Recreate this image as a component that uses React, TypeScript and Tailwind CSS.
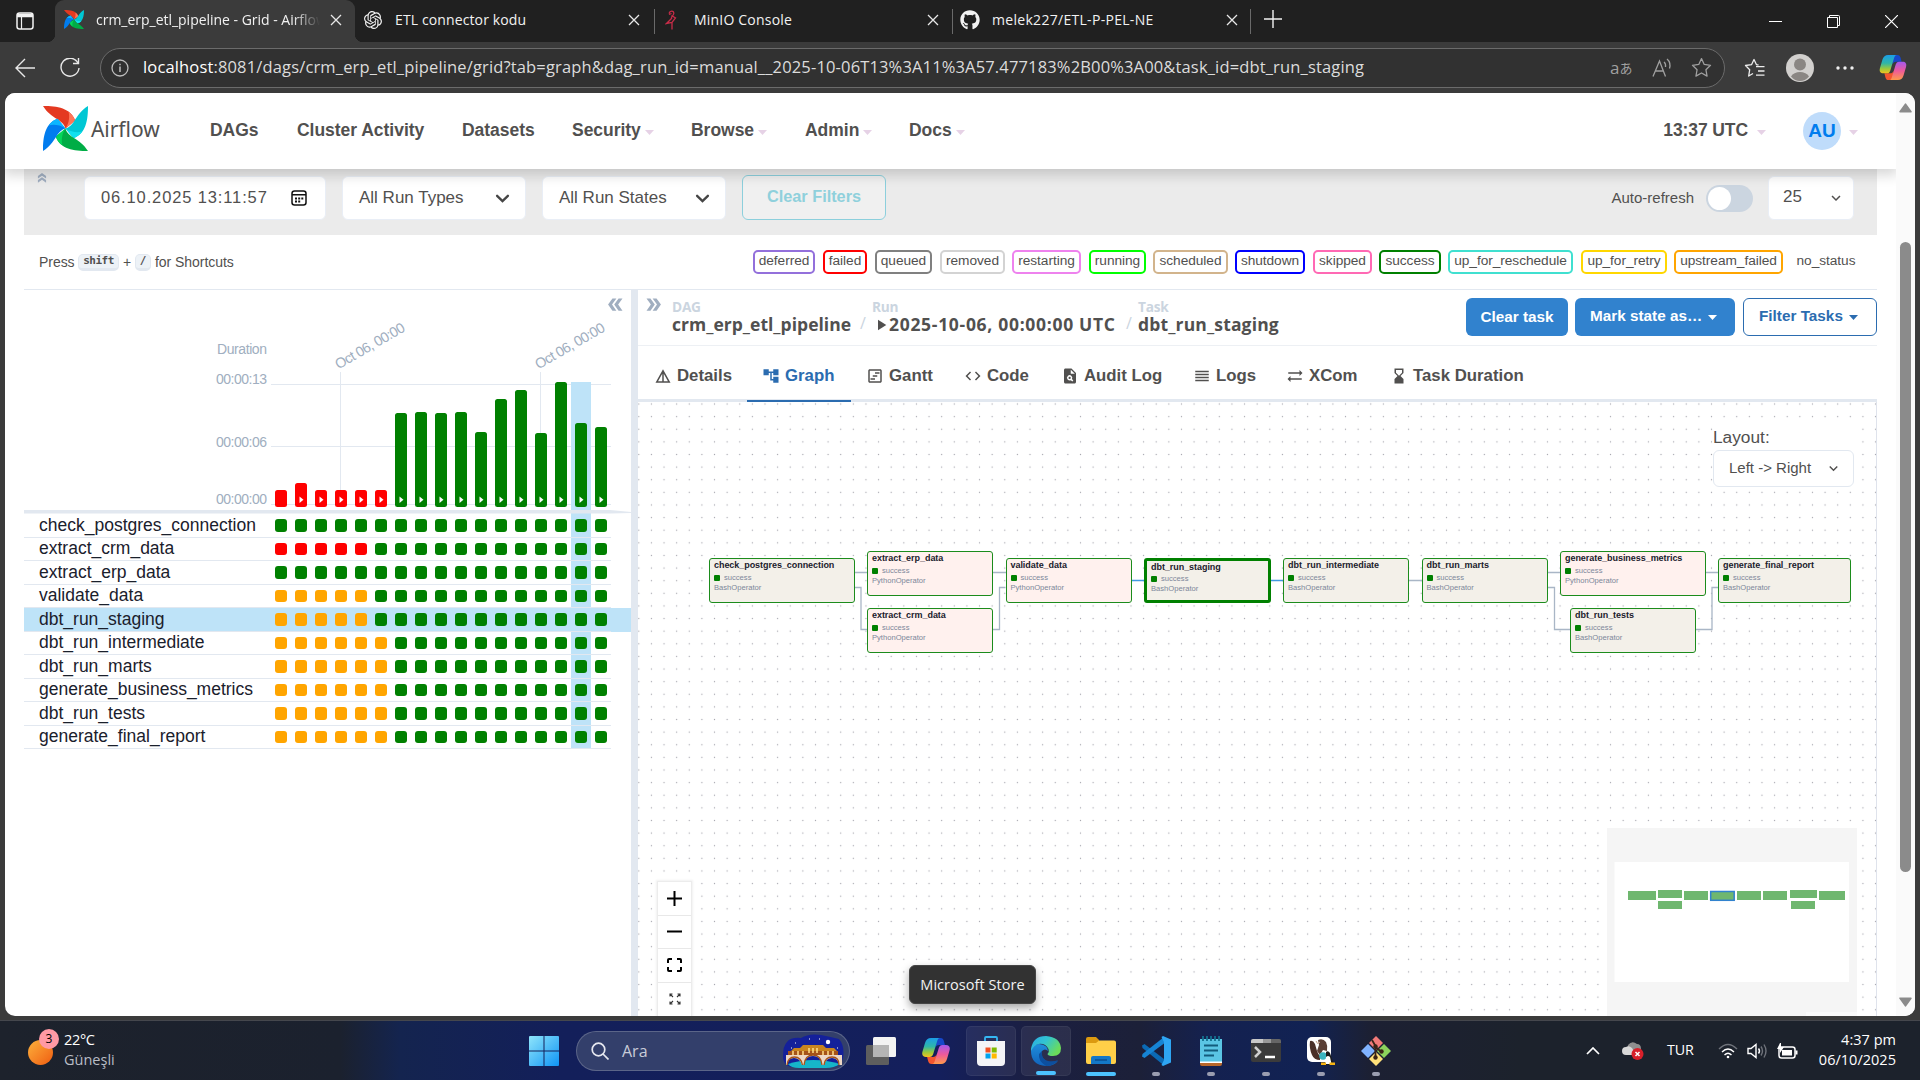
import React from "react";
import {
  MdAccountTree,
  MdCode,
  MdDetails,
  MdDoubleArrow,
  MdHourglassBottom,
  MdKeyboardArrowDown,
  MdOutlineViewTimeline,
  MdPlagiarism,
  MdPlayArrow,
  MdReorder,
  MdSyncAlt,
} from "react-icons/md";
import { SiOpenai } from "react-icons/si";
import { FaGithub } from "react-icons/fa";

const UI = "font-['Open_Sans','Noto_Sans',sans-serif]";

/* ---------- logos and small drawings ---------- */

function Pinwheel({ className }: { className: string }) {
  const blades = [
    { r: 0, a: "#e43921", b: "#ff7557" },
    { r: 90, a: "#00c7d4", b: "#11e1ee" },
    { r: 180, a: "#00ad46", b: "#04d659" },
    { r: 270, a: "#017cee", b: "#0cb6ff" },
  ];
  return (
    <svg viewBox="0 0 44 44" preserveAspectRatio="none" className={className}>
      {blades.map((b) => (
        <g key={b.r} transform={`rotate(${b.r} 22 22)`}>
          <path d="M0 0 C14 0 27 2 31.5 14 L22 22 C20 13 8 13 0 0Z" fill={b.a} />
          <path d="M22 22 C26 16 26 10 25 5.5 C28 8 30.5 10.500 31.500 14.500Z" fill={b.b} />
        </g>
      ))}
    </svg>
  );
}

function CopilotLogo({ className, id }: { className: string; id: string }) {
  return (
    <svg viewBox="0 0 28 28" className={className}>
      <defs>
        <linearGradient id={id + "a"} x1="0" y1="0" x2="0" y2="1">
          <stop offset="0" stopColor="#1b9de8" />
          <stop offset=".45" stopColor="#2fb6a8" />
          <stop offset=".75" stopColor="#9bc93c" />
          <stop offset="1" stopColor="#f4c21f" />
        </linearGradient>
        <linearGradient id={id + "b"} x1="0" y1="0" x2="0" y2="1">
          <stop offset="0" stopColor="#a459ee" />
          <stop offset=".5" stopColor="#ee5a9a" />
          <stop offset="1" stopColor="#ff9a4a" />
        </linearGradient>
      </defs>
      <path d="M14 1h4.500c2 0 2.800 1 3.400 3l1 4h-5.500c-2.500 0-3.400 1-4 3z" fill="#1747c9" />
      <path d="M14 27H9.500c-2 0-2.800-1-3.400-3l-1-4h5.500c2.500 0 3.400-1 4-3z" fill="#f4562f" />
      <path d="M9 1h9c-1.500 0-2.200 1-2.800 3l-4 13c-.7 2-1.600 3-3.500 3H4c-3 0-4.500-2-3.500-5.500l2.500-8.500C4 2.500 6 1 9 1z" fill={`url(#${id}a)`} />
      <path d="M19 27h-9c1.500 0 2.200-1 2.800-3l4-13c.7-2 1.600-3 3.500-3H24c3 0 4.500 2 3.500 5.500l-2.500 8.500c-1 3.500-3 5-6 5z" fill={`url(#${id}b)`} />
    </svg>
  );
}

function Caret({ className }: { className: string }) {
  return (
    <svg viewBox="0 0 10 5" className={className} preserveAspectRatio="none">
      <path d="M0 0h10L5 5z" fill="currentColor" />
    </svg>
  );
}

function Cross({ className }: { className: string }) {
  return (
    <svg viewBox="0 0 12 12" className={className} fill="none" stroke="#e8e8e8" strokeWidth="1.300">
      <path d="M1 1l10 10M11 1L1 11" />
    </svg>
  );
}

/* ---------- browser chrome ---------- */

function TabStrip() {
  return (
    <div className={`${UI} flex h-[42px] shrink-0 bg-[#202020] text-[14px] text-[#f2f2f2]`}>
      <div className="flex w-[55px] items-center rounded-br-[8px] pl-[16px]">
        <svg viewBox="0 0 18 18" className="h-[18px] w-[18px]" fill="none" stroke="#f2f2f2" strokeWidth="1.500">
          <rect x="1" y="1" width="16" height="16" rx="2.500" />
          <path d="M1 3.500h16" strokeWidth="3.500" />
          <path d="M5.500 4v13" strokeWidth="1.200" />
        </svg>
      </div>
      <div className="relative flex w-[300px] items-center rounded-t-[9px] bg-[#3b3b3b] pb-[3px] pl-[9px]">
        <span className="absolute bottom-0 left-[-8px] h-2 w-2 bg-[radial-gradient(circle_at_0_0,#202020_8px,#3b3b3b_8.500px)]" />
        <span className="absolute right-[-8px] bottom-0 h-2 w-2 bg-[radial-gradient(circle_at_100%_0,#202020_8px,#3b3b3b_8.500px)]" />
        <Pinwheel className="h-[19px] w-[20px]" />
        <div className="ml-[12px] w-[224px] overflow-hidden whitespace-nowrap tracking-[-0.020px] [mask-image:linear-gradient(90deg,#000_88%,transparent_100%)]">
          crm_erp_etl_pipeline - Grid - Airflow
        </div>
        <Cross className="ml-[10px] h-[12px] w-[12px]" />
      </div>
      <div className="flex w-[299px] items-center pb-[3px] pl-[9px]">
        <SiOpenai className="h-[18px] w-[18px]" />
        <div className="ml-[13px] w-[232px] tracking-[0.120px]">ETL connector kodu</div>
        <Cross className="ml-[1px] h-[12px] w-[12px]" />
      </div>
      <div className="mt-[9px] h-[25px] w-px bg-[#6a6a6a]" />
      <div className="flex w-[297px] items-center pb-[3px] pl-[10px]">
        <svg viewBox="0 0 12 20" className="h-[20px] w-[12px]" fill="none" stroke="#c72c48" strokeWidth="1.300">
          <path d="M4 3.500C5 0 9 .5 8.800 3.500C8.500 6 6 6 6.500 8.500M6.500 3.500l-2.500 1M7 8L1.500 13.500l5.500-1 3.500-4.500L6.500 5.500M7 12V19.500" />
        </svg>
        <div className="ml-[17px] w-[232px] tracking-[0.200px]">MinIO Console</div>
        <Cross className="ml-[1px] h-[12px] w-[12px]" />
      </div>
      <div className="mt-[9px] h-[25px] w-px bg-[#6a6a6a]" />
      <div className="flex w-[297px] items-center pb-[3px] pl-[7px]">
        <FaGithub className="h-[20px] w-[20px]" />
        <div className="ml-[12px] w-[232px] tracking-[0.300px]">melek227/ETL-P-PEL-NE</div>
        <Cross className="ml-[2px] h-[12px] w-[12px]" />
      </div>
      <div className="mt-[9px] h-[25px] w-px bg-[#6a6a6a]" />
      <svg viewBox="0 0 18 18" className="mt-[10px] ml-[13px] h-[18px] w-[18px]" stroke="#f2f2f2" strokeWidth="1.400">
        <path d="M0 9h18M9 0v18" />
      </svg>
      <div className="ml-auto flex items-center gap-[45px] pr-[22px]">
        <svg viewBox="0 0 13 13" className="h-[13px] w-[13px]" stroke="#fff">
          <path d="M0 6.500h13" />
        </svg>
        <svg viewBox="0 0 13 13" className="h-[13px] w-[13px]" stroke="#fff" fill="none">
          <path d="M.5 2.500h10v10H.5zM2.500 2.500V.5h9q1 0 1 1v9h-2" />
        </svg>
        <svg viewBox="0 0 13 13" className="h-[13px] w-[13px]" stroke="#fff" strokeWidth="1.200">
          <path d="M0 0l13 13M13 0L0 13" />
        </svg>
      </div>
    </div>
  );
}

const STAR = "M10 1.500l2.600 5.600 6 .8-4.400 4.200 1.100 6.100L10 15.200l-5.300 3 1.100-6.100L1.400 7.900l6-.8z";

function Toolbar() {
  return (
    <div className={`${UI} flex h-[51px] shrink-0 items-center bg-[#3b3b3b]`}>
      <svg viewBox="0 0 20 20" className="ml-[15px] h-[20px] w-[20px]" fill="none" stroke="#e8e8e8" strokeWidth="1.400">
        <path d="M20 10H1M10 1L1 10l9 9" />
      </svg>
      <svg viewBox="0 0 20 20" className="ml-[25px] h-[20px] w-[20px]" fill="none" stroke="#e8e8e8" strokeWidth="1.400">
        <path d="M18 5A9 9 0 1 0 19 10M18.500 0v5.500H13" />
      </svg>
      <div className="ml-[20px] flex h-[40px] w-[1625px] items-center rounded-full border border-[#6b6b6b] bg-[#313131] pl-[10px]">
        <svg viewBox="0 0 18 18" className="h-[18px] w-[18px]" fill="none" stroke="#bdbdbd" strokeWidth="1.300">
          <circle cx="9" cy="9" r="8" />
          <path d="M9 7.500v5.500M9 4.800v1.500" strokeWidth="1.500" />
        </svg>
        <div className="ml-[14px] w-[1460px] text-[16.500px] tracking-[0.150px] whitespace-nowrap text-[#dcdcdc]">
          <span className="text-white">localhost</span>
          :8081/dags/crm_erp_etl_pipeline/grid?tab=graph&amp;dag_run_id=manual__2025-10-06T13%3A11%3A57.477183%2B00%3A00&amp;task_id=dbt_run_staging
        </div>
        <div className="ml-[7px] flex w-[22px] items-center text-[#a0a0a0]">
          <span className="text-[17px] leading-none">a</span>
          <span className="font-['Noto_Sans_CJK_JP',sans-serif] text-[13px] leading-none">あ</span>
        </div>
        <svg viewBox="0 0 20 20" className="ml-[20px] h-[20px] w-[20px]" fill="none" stroke="#a0a0a0" strokeWidth="1.300">
          <path d="M1 18.500L7.500 3l6 15.500M3.500 13h8M12 4c1.500 1.200 1.800 3 1.500 5M15 1c3 2.500 3.500 6 2.500 9.500" />
        </svg>
        <svg viewBox="0 0 20 20" className="ml-[19px] h-[21px] w-[21px]" fill="none" stroke="#a0a0a0" strokeWidth="1.200" strokeLinejoin="round">
          <path d={STAR} />
        </svg>
      </div>
      <svg viewBox="0 0 21 20" className="ml-[19px] h-[20px] w-[21px]" fill="none" stroke="#ededed" strokeWidth="1.300" strokeLinejoin="round">
        <path d="M14.500 7L12.500 6.700 10 1.500 7.500 6.700 1.500 7.500 5.700 11.700 4.700 18 9 15.500M12 8.700h8.500M14 13h6.500M12 17.200h8.500" />
      </svg>
      <svg viewBox="0 0 28 28" className="ml-[21px] h-[28px] w-[28px]">
        <circle cx="14" cy="14" r="14" fill="#d2d0ce" />
        <circle cx="14" cy="10.500" r="6" fill="#8a8683" />
        <path d="M5 22.500C8 16.500 20 16.500 23 22.500C18 28.500 10 28.500 5 22.500z" fill="#8a8683" />
      </svg>
      <svg viewBox="0 0 18 4" className="ml-[22px] h-[4px] w-[18px]" fill="#f0f0f0">
        <circle cx="2" cy="2" r="1.700" />
        <circle cx="9" cy="2" r="1.700" />
        <circle cx="16" cy="2" r="1.700" />
      </svg>
      <CopilotLogo id="tb" className="ml-[25px] h-[27px] w-[28px]" />
    </div>
  );
}

/* ---------- Airflow page ---------- */

function NavBar() {
  const items: [string, string, boolean][] = [
    ["DAGs", "w-[87px]", false],
    ["Cluster Activity", "w-[165px]", false],
    ["Datasets", "w-[110px]", false],
    ["Security", "w-[119px]", true],
    ["Browse", "w-[114px]", true],
    ["Admin", "w-[104px]", true],
    ["Docs", "w-[80px]", true],
  ];
  return (
    <div className="relative z-10 flex h-[76px] shrink-0 items-center bg-white pl-[38px] text-[17.500px] font-bold text-[#51504f] shadow-[0_4px_12px_2px_rgba(0,0,0,0.16)]">
      <Pinwheel className="mb-[6px] h-[45px] w-[45px]" />
      <span className="ml-[3px] w-[119px] pb-[3px] font-['Noto_Sans',sans-serif] text-[21px] font-normal tracking-[-0.050px]">Airflow</span>
      {items.map(([label, w, caret]) => (
        <div key={label} className={`flex items-center pb-[2px] tracking-[-0.030px] whitespace-nowrap ${w}`}>
          {label}
          {caret && <Caret className="mt-[4px] ml-[4px] h-[5px] w-[9px] text-[#e6d2e6]" />}
        </div>
      ))}
      <div className="mr-[38px] ml-auto flex items-center">
        <span className="pb-[2px] tracking-[-0.1px] whitespace-nowrap">13:37 UTC</span>
        <Caret className="mt-[2px] ml-[9px] h-[5px] w-[9px] text-[#e6d2e6]" />
        <span className="ml-[37px] flex h-[38px] w-[38px] items-center justify-center rounded-full bg-[#bfdcfb] text-[19px] text-[#017cee]">AU</span>
        <Caret className="mt-[2px] ml-[8px] h-[5px] w-[9px] text-[#e6d2e6]" />
      </div>
    </div>
  );
}

function Chevron({ className }: { className: string }) {
  return (
    <svg viewBox="0 0 16 10" className={className} fill="none" stroke="#454545" strokeWidth="2.600" strokeLinecap="round">
      <path d="M2 2l6 6 6-6" />
    </svg>
  );
}

function FilterBar() {
  const box = "flex h-[44px] items-center rounded-[6px] border border-[#e9eef6] bg-white";
  return (
    <div className="flex h-[66px] shrink-0 items-start bg-[#ebebeb] pt-[7px] text-[17px] text-[#51504f]">
      <MdDoubleArrow className="mt-[-5px] ml-[11px] h-[14px] w-[14px] -rotate-90 text-[#a0aec0]" />
      <div className={`${box} ml-[35px] w-[242px] pl-[16px]`}>
        <span className="w-[190px] pb-[2px] text-[16.500px] tracking-[0.870px] whitespace-nowrap">06.10.2025 13:11:57</span>
        <svg viewBox="0 0 16 16" className="h-[16px] w-[16px]" fill="none" stroke="#111" strokeWidth="1.500">
          <rect x="1" y="1" width="14" height="14" rx="2.500" />
          <path d="M1 4.800h14" />
          <path d="M4 8.500h2M7.200 8.500h2M10.300 8.500h2M4 11.500h2M7.200 11.500h2" strokeWidth="1.800" />
        </svg>
      </div>
      <div className={`${box} ml-[16px] w-[184px] pl-[16px]`}>
        <span className="w-[136px]">All Run Types</span>
        <Chevron className="h-[9px] w-[15px]" />
      </div>
      <div className={`${box} ml-[16px] w-[184px] pl-[16px]`}>
        <span className="w-[136px]">All Run States</span>
        <Chevron className="h-[9px] w-[15px]" />
      </div>
      <div className="mt-[-1px] ml-[16px] flex h-[45px] w-[144px] items-center justify-center rounded-[6px] border border-[#8ccfdc] bg-[#f0f0f0] pb-[2px] text-[16.300px] font-bold text-[#8fd0dc]">
        Clear Filters
      </div>
      <div className="mr-[23px] ml-auto flex items-center">
        <span className="text-[15px]">Auto-refresh</span>
        <div className="ml-[12px] flex h-[27px] w-[47px] items-center rounded-full bg-[#cbd5e0] pl-[2px]">
          <div className="h-[23px] w-[23px] rounded-full bg-white" />
        </div>
        <div className={`${box} ml-[15px] w-[86px] pl-[14px]`}>
          <span className="w-[44px] pb-[3px]">25</span>
          <MdKeyboardArrowDown className="h-[18px] w-[18px]" />
        </div>
      </div>
    </div>
  );
}

const LEGEND: [string, string][] = [
  ["deferred", "ml-0 w-[62px] border-[mediumpurple]"],
  ["failed", "ml-[8px] w-[44px] border-[red]"],
  ["queued", "ml-[8px] w-[57px] border-[gray]"],
  ["removed", "ml-[8px] w-[65px] border-[lightgrey]"],
  ["restarting", "ml-[7px] w-[69px] border-[violet]"],
  ["running", "ml-[8px] w-[57px] border-[lime]"],
  ["scheduled", "ml-[7px] w-[75px] border-[tan]"],
  ["shutdown", "ml-[7px] w-[70px] border-[blue]"],
  ["skipped", "ml-[8px] w-[59px] border-[hotpink]"],
  ["success", "ml-[7px] w-[62px] border-[green]"],
  ["up_for_reschedule", "ml-[7px] w-[125px] border-[turquoise]"],
  ["up_for_retry", "ml-[8px] w-[86px] border-[gold]"],
  ["upstream_failed", "ml-[7px] w-[109px] border-[orange]"],
  ["no_status", "ml-[8px] w-[70px] border-transparent"],
];

function LegendRow() {
  const kbd =
    "flex h-[17px] items-center rounded-[5px] border border-b-[3px] border-[#e2e8f0] bg-[#edf2f7] font-['DejaVu_Sans_Mono',monospace] text-[11px] font-bold";
  return (
    <div className="flex h-[55px] shrink-0 items-start border-b border-[#e2e8f0] pt-[15px] text-[13.700px] text-[#51504f]">
      <div className="flex h-[24px] items-center pl-[15px] text-[14px] tracking-[-0.050px]">
        <span className="w-[39px]">Press</span>
        <span className={`${kbd} w-[41px] justify-center tracking-[-0.5px]`}>shift</span>
        <span className="w-[16px] text-center">+</span>
        <span className={`${kbd} w-[16px] justify-center`}>/</span>
        <span className="ml-[4px]">for Shortcuts</span>
      </div>
      <div className="mr-[16px] ml-auto flex">
        {LEGEND.map(([name, cls]) => (
          <span key={name} className={`flex h-[24px] items-center justify-center rounded-[5px] border-2 pb-[1px] tracking-[-0.050px] whitespace-nowrap ${cls}`}>
            {name}
          </span>
        ))}
      </div>
    </div>
  );
}

/* ---------- left: run durations and task grid ---------- */

const TOPS = [490, 483, 490, 490, 490, 490, 413, 412, 413, 412, 432, 399, 390, 433, 382, 423, 427];
const SELECTED = 15;

function DurationChart() {
  return (
    <svg viewBox="24 290 607 224" className="h-[224px] w-[607px] shrink-0 font-['Liberation_Sans',Arial,sans-serif]">
      <g stroke="#e2e8f0">
        <path d="M271 384.500h340M271 446.500h340M271 504.500h340M340.500 372v118M540.500 372v61" />
      </g>
      <rect x="571" y="382" width="20" height="132" fill="#bee3f8" />
      <g fill="#a0aec0" fontSize="14" textAnchor="end">
        <text x="267" y="354" textLength="50">Duration</text>
        <text x="267" y="384" textLength="51">00:00:13</text>
        <text x="267" y="447" textLength="51">00:00:06</text>
        <text x="267" y="504" textLength="51">00:00:00</text>
      </g>
      <g fill="#a0aec0" fontSize="14.300">
        <text transform="translate(338.500 369.500) rotate(-30)" textLength="78">Oct 06, 00:00</text>
        <text transform="translate(538.500 369.500) rotate(-30)" textLength="78">Oct 06, 00:00</text>
      </g>
      {TOPS.map((top, i) => (
        <g key={i}>
          <rect x={275 + i * 20} y={top} width="12" height={507 - top} rx="2.500" fill={i < 6 ? "red" : "green"} />
          {i > 0 && <path d={`M${279.5 + i * 20} 496.500v6.500l4-3.250z`} fill="#fff" />}
        </g>
      ))}
      <path d="M24 510H610L631 512V513L611 513.500H24z" fill="#e2e8f0" />
    </svg>
  );
}

const TASKS: [string, string][] = [
  ["check_postgres_connection", "ggggggggggggggggg"],
  ["extract_crm_data", "rrrrrgggggggggggg"],
  ["extract_erp_data", "ggggggggggggggggg"],
  ["validate_data", "ooooogggggggggggg"],
  ["dbt_run_staging", "ooooogggggggggggg"],
  ["dbt_run_intermediate", "ooooooggggggggggg"],
  ["dbt_run_marts", "ooooooggggggggggg"],
  ["generate_business_metrics", "ooooooggggggggggg"],
  ["dbt_run_tests", "ooooooggggggggggg"],
  ["generate_final_report", "ooooooggggggggggg"],
];

function TaskGrid() {
  return (
    <div className="flex flex-col text-[17.500px] text-[#1a202c]">
      {TASKS.map(([name, states], row) => (
        <div key={name} className={`flex h-[23.500px] shrink-0 ${row === 4 ? "w-[607px] bg-[#bee3f8]" : "w-[587px]"}`}>
          <div className="flex w-[587px] border-b border-[#e2e8f0]">
            <div className="flex w-[247px] items-center pl-[15px] leading-none whitespace-nowrap">{name}</div>
            {states.split("").map((s, i) => (
              <div key={i} className={`flex w-[20px] items-center justify-center ${i === SELECTED ? "bg-[#bee3f8]" : ""}`}>
                <div className={`h-[12.500px] w-[12px] rounded-[3px] ${s === "g" ? "bg-[green]" : s === "r" ? "bg-[red]" : "bg-[orange]"}`} />
              </div>
            ))}
          </div>
        </div>
      ))}
    </div>
  );
}

function GridPanel() {
  return (
    <div className="relative flex w-[607px] shrink-0 flex-col">
      <MdDoubleArrow className="absolute top-[4px] right-[5px] h-[21px] w-[21px] rotate-180 text-[#a0aec0]" />
      <DurationChart />
      <TaskGrid />
    </div>
  );
}

/* ---------- right: task header, tabs, graph ---------- */

function Crumb({ label, value, className, icon }: { label: string; value: string; className: string; icon?: boolean }) {
  return (
    <div className={`flex flex-col font-bold whitespace-nowrap ${className}`}>
      <span className="h-[16px] text-[13.700px] leading-[16px] tracking-[-0.250px] text-[#cbd5e0]">{label}</span>
      <span className="flex h-[18px] items-center text-[17.500px] leading-[18px] text-[#51504f]">
        {icon && <MdPlayArrow className="mt-[2px] mr-[-1px] h-[18px] w-[18px]" />}
        {value}
      </span>
    </div>
  );
}

function TaskHeader() {
  return (
    <div className="flex h-[56px] shrink-0 items-start border-b border-[#edf0f4]">
      <MdDoubleArrow className="mt-[4px] ml-[5px] h-[21px] w-[21px] text-[#a0aec0]" />
      <div className={`${UI} flex pt-[9px] pl-[8px]`}>
        <Crumb label="DAG" value="crm_erp_etl_pipeline" className="w-[188px] tracking-[0.020px]" />
        <span className="w-[12px] pt-[15px] text-[16px] leading-[18px] text-[#cbd5e0]">/</span>
        <Crumb label="Run" value="2025-10-06, 00:00:00 UTC" className="w-[254px] tracking-[0.700px]" icon />
        <span className="w-[12px] pt-[15px] text-[16px] leading-[18px] text-[#cbd5e0]">/</span>
        <Crumb label="Task" value="dbt_run_staging" className="w-[160px] tracking-[0.150px]" />
      </div>
      <div className="ml-auto flex pt-[8px] text-[15.300px] font-bold text-white">
        <div className="flex h-[38px] w-[102px] items-center justify-center rounded-[6px] bg-[#3182ce]">Clear task</div>
        <div className="ml-[7px] flex h-[38px] w-[160px] items-center rounded-[6px] bg-[#3182ce] pb-[2px] pl-[15px]">
          Mark state as…
          <Caret className="mt-[2px] ml-[6px] h-[5px] w-[9px]" />
        </div>
        <div className="ml-[8px] flex h-[38px] w-[134px] items-center rounded-[6px] border border-[#2b6cb0] pb-[2px] pl-[15px] text-[#2b6cb0]">
          Filter Tasks
          <Caret className="mt-[2px] ml-[6px] h-[5px] w-[9px]" />
        </div>
      </div>
    </div>
  );
}

function TabsRow() {
  const tabs: [string, React.ComponentType<{ className?: string }>, string][] = [
    ["Details", MdDetails, "w-[108px]"],
    ["Graph", MdAccountTree, "w-[104px]"],
    ["Gantt", MdOutlineViewTimeline, "w-[98px]"],
    ["Code", MdCode, "w-[97px]"],
    ["Audit Log", MdPlagiarism, "w-[132px]"],
    ["Logs", MdReorder, "w-[93px]"],
    ["XCom", MdSyncAlt, "w-[104px]"],
    ["Task Duration", MdHourglassBottom, "w-[160px]"],
  ];
  return (
    <div className="flex h-[56px] shrink-0 border-b-[3px] border-[#e2e8f0] pl-[1px] text-[16.800px] font-bold text-[#51504f]">
      {tabs.map(([label, Icon, w]) => (
        <div
          key={label}
          className={`mb-[-3px] flex items-center pt-[5px] pb-0 pl-[15px] whitespace-nowrap ${w} ${label === "Graph" ? "border-b-2 border-[#2b6cb0] text-[#2b6cb0]" : "border-b-2 border-transparent"}`}
        >
          <Icon className="mr-[5px] h-[18px] w-[18px]" />
          {label}
        </div>
      ))}
    </div>
  );
}

type Node = { id: string; x: number; y: number; w: number; py?: boolean };
const NODES: Node[] = [
  { id: "check_postgres_connection", x: 709, y: 558, w: 145.5 },
  { id: "extract_erp_data", x: 867, y: 551, w: 126, py: true },
  { id: "extract_crm_data", x: 867, y: 608, w: 126, py: true },
  { id: "validate_data", x: 1005.5, y: 558, w: 126, py: true },
  { id: "dbt_run_staging", x: 1144, y: 558, w: 126.5 },
  { id: "dbt_run_intermediate", x: 1283, y: 558, w: 126 },
  { id: "dbt_run_marts", x: 1421.5, y: 558, w: 126 },
  { id: "generate_business_metrics", x: 1560, y: 551, w: 145.5, py: true },
  { id: "dbt_run_tests", x: 1570, y: 608, w: 126 },
  { id: "generate_final_report", x: 1718, y: 558, w: 133 },
];
const OX = 638;
const OY = 402;

function GraphNode({ n }: { n: Node }) {
  const selected = n.id === "dbt_run_staging";
  return (
    <div
      className={`absolute flex h-[44.500px] flex-col rounded-[3px] text-[7.600px] leading-none whitespace-nowrap text-[#7c879a] ${n.py ? "bg-[#fff1ee]" : "bg-[#f3f0e9]"} ${selected ? "border-[3px] border-[green] pt-[2px] pl-[4px]" : "border border-[#1c8c1c] pt-[2px] pl-[4px]"}`}
      style={{ left: n.x - OX, top: n.y - OY, width: n.w }}
    >
      <span className="h-[9px] text-[9px] leading-[9px] font-bold tracking-[-0.050px] text-[#1a202c]">{n.id}</span>
      <span className={`flex h-[7px] items-center ${selected ? "mt-[3px]" : "mt-[4px]"}`}>
        <span className="mr-[4px] h-[6px] w-[6px] rounded-[1px] bg-[green]" />
        success
      </span>
      <span className="mt-[3px]">{n.py ? "PythonOperator" : "BashOperator"}</span>
    </div>
  );
}

const MINI: [number, number, number, number][] = [
  [1628, 891, 28, 9],
  [1658, 890, 24, 8],
  [1658, 901, 24, 8],
  [1684, 891, 24, 9],
  [1737, 891, 24, 9],
  [1763, 891, 24, 9],
  [1790, 890, 27, 8],
  [1791, 901, 24, 8],
  [1819, 891, 26, 9],
];

function GraphCanvas() {
  return (
    <div className="relative flex-1 overflow-hidden border-r border-[#dfe3ec]">
      <svg viewBox="638 402 1239 614" className="absolute inset-0 h-[614px] w-[1239px]" fill="none">
        <defs>
          <pattern id="dots" x="645.100" y="397.700" width="12.620" height="12.620" patternUnits="userSpaceOnUse">
            <circle cx="6.310" cy="6.310" r=".65" fill="#a6a6ae" />
          </pattern>
        </defs>
        <rect x="638" y="402" width="1239" height="614" fill="url(#dots)" />
        <g stroke="#a9b6c6" strokeWidth="1.300">
          <path d="M854 572.500h13M854 587.500h7v42h6M993 572.500h13M993 629.500h6.500v-42h6M1409 580.500h13M1547 572.500h14M1547 587.500h7.500v42h16M1705 572.500h14M1696 629.500h16v-42h6" />
        </g>
        <path d="M1131 580.500h13M1270 580.500h13" stroke="#4299e1" strokeWidth="1.600" />
      </svg>
      {NODES.map((n) => (
        <GraphNode key={n.id} n={n} />
      ))}
      <div className="absolute top-[22px] right-[22px] flex w-[141px] flex-col text-[17.300px] text-[#51504f]">
        <span className="h-[26px] bg-white leading-[26px]">Layout:</span>
        <div className="flex h-[37px] items-center rounded-[6px] border border-[#e2e8f0] bg-white pl-[15px] text-[15px]">
          <span className="w-[96px] whitespace-nowrap">Left -&gt; Right</span>
          <MdKeyboardArrowDown className="h-[17px] w-[17px]" />
        </div>
      </div>
      <div className="absolute top-[479px] left-[19px] flex w-[35px] flex-col border border-[#ececec] bg-white shadow-[0_0_2px_1px_rgba(0,0,0,0.060)]">
        {["M0 7.500h15M7.500 0v15", "M0 7.500h15"].map((d) => (
          <div key={d} className="flex h-[33.500px] items-center justify-center border-b border-[#e8e8e8]">
            <svg viewBox="0 0 15 15" className="h-[15px] w-[15px]" stroke="#000" strokeWidth="2">
              <path d={d} />
            </svg>
          </div>
        ))}
        <div className="flex h-[33.500px] items-center justify-center border-b border-[#e8e8e8]">
          <svg viewBox="0 0 15 14" className="h-[14px] w-[15px]" stroke="#000" strokeWidth="2" fill="none">
            <path d="M1 5V2q0-1 1-1h3M10 1h3q1 0 1 1v3M14 9v3q0 1-1 1h-3M5 13H2q-1 0-1-1V9" />
          </svg>
        </div>
        <div className="flex h-[33.500px] items-center justify-center">
          <svg viewBox="0 0 12 12" className="h-[12px] w-[12px]" stroke="#333" strokeWidth="1.100" fill="none">
            <path d="M1 3.500V1h2.500M1 1l3 3M8.500 1H11v2.500M11 1L8 4M11 8.500V11H8.500M11 11L8 8M3.500 11H1V8.500M1 11l3-3" />
          </svg>
        </div>
      </div>
      <div className="absolute top-[426px] left-[969px] flex h-[188px] w-[250px] bg-[#f5f5f5]">
        <svg viewBox="1607 828 250 188" className="h-[188px] w-[250px]">
          <rect x="1614.500" y="862" width="234.500" height="120" fill="#fff" />
          {MINI.map(([x, y, w, h], i) => (
            <rect key={i} x={x} y={y} width={w} height={h} fill="#6fb76f" />
          ))}
          <rect x="1710.700" y="891.500" width="23.500" height="8.800" fill="#6fb76f" stroke="#3182ce" strokeWidth="1.500" />
          <rect x="1806" y="1012" width="51" height="4" fill="#fafafa" />
        </svg>
      </div>
    </div>
  );
}

function ScrollBar() {
  return (
    <div className="flex w-[19px] shrink-0 flex-col items-center bg-[#fafafa]">
      <svg viewBox="0 0 12 9" className="mt-[10px] h-[10px] w-[13px]">
        <path d="M6 1L11 8H1z" fill="#8b8b8b" stroke="#8b8b8b" strokeWidth="1.500" strokeLinejoin="round" />
      </svg>
      <div className="mt-[129px] h-[630px] w-[11px] rounded-full bg-[#8b8b8b]" />
      <svg viewBox="0 0 12 9" className="mt-[125px] h-[10px] w-[13px]">
        <path d="M6 8L1 1h10z" fill="#8b8b8b" stroke="#8b8b8b" strokeWidth="1.500" strokeLinejoin="round" />
      </svg>
    </div>
  );
}

/* ---------- taskbar ---------- */

function Slot({ children, bar, tile }: { children: React.ReactNode; bar?: string; tile?: boolean }) {
  return (
    <div className={`relative mx-[2.500px] flex h-[50px] w-[50px] items-center justify-center rounded-[5px] ${tile ? "border border-white/5 bg-white/7" : ""}`}>
      {children}
      {bar && <span className={`absolute bottom-0 h-[4px] rounded-full ${bar}`} />}
    </div>
  );
}

function Taskbar() {
  return (
    <div className={`${UI} flex h-[60px] shrink-0 items-center border-t border-[#45474d] bg-[linear-gradient(90deg,#1d222c_0px,#1b212e_340px,#14244f_400px,#131f5a_560px,#141f5c_940px,#1b1f42_1030px,#1c2038_1140px,#142150_1210px,#112253_1310px,#1c2033_1370px,#1c222c_1520px,#1c222c_1920px)] text-[14px] text-white`}>
      <div className="relative ml-[28px] h-[34px] w-[32px]">
        <div className="absolute bottom-[3px] left-0 h-[25px] w-[25px] rounded-full bg-linear-to-br from-[#fbb03b] to-[#ee5a0e]" />
        <div className="absolute top-[-5px] right-[1px] flex h-[20px] w-[20px] items-center justify-center rounded-full bg-[#ff99a4] text-[12px] text-black">3</div>
      </div>
      <div className="ml-[4px] flex w-[465px] flex-col pb-[2px] text-[14.500px] leading-[20px]">
        <span className="tracking-[-0.350px]">22°C</span>
        <span className="text-[#b9bdc6]">Güneşli</span>
      </div>
      <svg viewBox="0 0 30 30" className="h-[30px] w-[30px]">
        <defs>
          <linearGradient id="win" x1="0" y1="0" x2="1" y2="1" gradientUnits="objectBoundingBox">
            <stop offset="0" stopColor="#8fe5fb" />
            <stop offset="1" stopColor="#0f94f5" />
          </linearGradient>
        </defs>
        <path d="M0 1q0-1 1-1h13.500v14.500H0zM15.500 0H29q1 0 1 1v13.500H15.500zM0 15.500h14.500V30H1q-1 0-1-1zM15.500 15.500H30V29q0 1-1 1H15.500z" fill="url(#win)" />
      </svg>
      <div className="ml-[17px] flex h-[40px] w-[274px] items-center rounded-full border border-white/20 bg-[#333f6b] pl-[14px]">
        <svg viewBox="0 0 18 18" className="h-[18px] w-[18px]" fill="none" stroke="#e6e8f0" strokeWidth="1.700">
          <circle cx="7.500" cy="7.500" r="6.300" />
          <path d="M12 12l5.500 5.500" />
        </svg>
        <span className="ml-[13px] w-[161px] text-[16px] text-[#c8cbd8]">Ara</span>
        <svg viewBox="0 0 61 34" className="h-[34px] w-[61px]">
          <path d="M4 8Q8 3 18 4Q26 -1 38 1Q48 3 56 5Q62 12 60 24Q58 34 46 33H14Q0 34 0 22Q0 12 4 8z" fill="#14209a" />
          <path d="M5 30q25-8 52 0-6 4-14 4H16q-8 0-11-4z" fill="#16b5c9" />
          <circle cx="45" cy="8" r="2.200" fill="#fff" />
          <path d="M12 9h1M26 5h1M36 5h1M8 14h1M54 14h1" stroke="#fff" />
          <path d="M8 17l3-3h6l3-3h20l3 3h8l3 3z" fill="#c8841f" />
          <path d="M5 17h50v5H5z" fill="#a5531a" />
          <path d="M10 17v4M15 17v4M20 17v4M26 14v5M30 14v5M34 14v5M40 17v4M45 17v4M50 17v4" stroke="#ffdf8a" strokeWidth="1.500" />
          <path d="M3 31V21h56v10h-3q-1-7-7-7t-8 7h-2q-1-9-9-9t-9 9h-2q-2-7-8-7t-7 7z" fill="#ecd7c6" />
          <path d="M4 31q1-8 7.500-8t8 8M21 31q1-10 9-10t9 10M41 31q1-8 8-8t7 8" fill="none" stroke="#a5531a" strokeWidth="1.300" />
        </svg>
      </div>
      <div className="ml-[3.500px] flex">
        <Slot>
          <svg viewBox="0 0 30 28" className="h-[28px] w-[30px]">
            <rect x="0" y="8" width="23" height="20" rx="1.500" fill="#5e5e5e" />
            <rect x="7" y="0" width="23" height="20" rx="1.500" fill="#f3f3f3" />
            <path d="M7 8h16v12H7z" fill="#b5b5b5" />
          </svg>
        </Slot>
        <Slot>
          <CopilotLogo id="tk" className="h-[28px] w-[28px]" />
        </Slot>
        <Slot tile>
          <svg viewBox="0 0 30 30" className="h-[30px] w-[30px]">
            <path d="M9 6V2q0-1 1-1h10q1 0 1 1v4" fill="none" stroke="#35b6f2" strokeWidth="1.800" />
            <path d="M1 5h28v21q0 4-4 4H5q-4 0-4-4z" fill="#f4f4f6" />
            <path d="M9.500 11.500h5v5h-5z" fill="#f25022" />
            <path d="M15.700 11.500h5v5h-5z" fill="#7fba00" />
            <path d="M9.500 17.500h5v5h-5z" fill="#00a4ef" />
            <path d="M15.700 17.500h5v5h-5z" fill="#ffb900" />
          </svg>
        </Slot>
        <Slot tile bar="w-[20px] bg-[#4cc2ff]">
          <svg viewBox="0 0 30 30" className="h-[30px] w-[30px]">
            <defs>
              <linearGradient id="e1" x1="0" y1="0" x2="1" y2=".5">
                <stop offset="0" stopColor="#2aa9e8" />
                <stop offset=".5" stopColor="#32c4d0" />
                <stop offset="1" stopColor="#6bdc5a" />
              </linearGradient>
              <linearGradient id="e2" x1="0" y1="0" x2="0" y2="1">
                <stop offset="0" stopColor="#1f8ddb" />
                <stop offset="1" stopColor="#1163bb" />
              </linearGradient>
            </defs>
            <path d="M0 15Q0 8 8 8q9 1 9 7-3-3-6 0-2 6 4 10 6 3 12 0-4 5-12 5Q0 29 0 15z" fill="url(#e2)" />
            <path d="M11 15q-1 8 6 10 6 1 10-1-4 6-12 6Q7 25 8 18z" fill="#0d4f9e" />
            <path d="M0 13Q2 0 15 0q14 1 15 12 0 8-8 8-5 0-5.500-2 2-2 1-5-3-6-10-5Q3 9 0 15z" fill="url(#e1)" />
          </svg>
        </Slot>
        <Slot bar="w-[30px] bg-[#4cc2ff]">
          <svg viewBox="0 0 30 28" className="h-[28px] w-[30px]">
            <path d="M0 2q0-2 2-2h8l3 3v6H0z" fill="#dc9a10" />
            <path d="M0 6h10l3-2.500h15q2 0 2 2V25q0 2-2 2H2q-2 0-2-2z" fill="#ffcf48" />
            <path d="M5 27v-6q0-2 2-2h16q2 0 2 2v6z" fill="#1478c8" />
            <path d="M9 23h12" stroke="#0a4f92" strokeWidth="1.500" />
          </svg>
        </Slot>
        <Slot bar="w-[8px] bg-[#9a9db0]">
          <svg viewBox="0 0 30 30" className="h-[30px] w-[30px]">
            <path d="M1 9.500L3.500 8 23 23V29.500L1.500 12z" fill="#0b6ab5" />
            <path d="M1 20.500L3.500 22 23 7.500V1L1.500 18z" fill="#1684d4" />
            <path d="M22 0l8 3.500v23L22 30l-1.500-1L23 24V6L20.500 1z" fill="#2ea5f3" />
          </svg>
        </Slot>
        <Slot bar="w-[8px] bg-[#9a9db0]">
          <svg viewBox="0 0 22 30" className="h-[30px] w-[22px]">
            <path d="M0 3h22v24H0z" fill="#5ac5e4" />
            <path d="M0 26h22v2q0 2-2 2H2q-2 0-2-2z" fill="#b8672a" />
            <path d="M0 25.500h22v1.500H0z" fill="#fff" />
            <path d="M3 0v5M7 0v5M11 0v5M15 0v5M19 0v5" stroke="#13708f" strokeWidth="1.800" />
            <path d="M4 9.500h14M4 14.500h14M4 19.500h10" stroke="#135c7c" strokeWidth="2" />
          </svg>
        </Slot>
        <Slot bar="w-[8px] bg-[#9a9db0]">
          <svg viewBox="0 0 30 23" className="h-[23px] w-[30px]">
            <rect width="30" height="23" rx="2" fill="#3b3b3b" />
            <path d="M0 2q0-2 2-2h10v4H0z" fill="#c8c8c8" />
            <path d="M12 0h8v4h-8z" fill="#999" />
            <path d="M20 0h8q2 0 2 2v2H20z" fill="#666" />
            <path d="M4 8l5 5-5 5" fill="none" stroke="#d0d0d0" strokeWidth="2.500" />
            <path d="M14 18h10" stroke="#fff" strokeWidth="2.500" />
          </svg>
        </Slot>
        <Slot bar="w-[8px] bg-[#9a9db0]">
          <svg viewBox="0 0 28 28" className="h-[28px] w-[28px]">
            <rect x="0" y="0" width="24" height="25" rx="5" fill="#fff" />
            <path d="M3 4q3-1 5 3l2 7q1 3 3 5v4q-6 0-8-5Q2 11 3 4z" fill="#4a3028" />
            <path d="M11 3q5-2 8 2 2 4 1 9l-4-1-3 5-3-4 2-6z" fill="#5b4036" />
            <path d="M9 4l1.500 2.500L13 5" fill="none" stroke="#c9a58c" />
            <circle cx="16" cy="19" r="3.800" fill="#3bb4c0" />
            <path d="M19 15q2-2 4 1l3 9q-2 3-7 3z" fill="#1b1b1b" />
            <path d="M19 20q2-2 4 0l1.500 7H18z" fill="#fff" />
            <path d="M14 25.500h5V28h-5zM22.500 25.500H28V28h-5.500z" fill="#f6b312" />
          </svg>
        </Slot>
        <Slot bar="w-[8px] bg-[#9a9db0]">
          <svg viewBox="0 0 30 30" className="h-[30px] w-[30px]">
            <path d="M15 0l7 7-7 7-7-7z" fill="#f27a78" />
            <path d="M23 8l7 7-7 7-7-7z" fill="#8cd35c" />
            <path d="M7 8l7 7-7 7-7-7z" fill="#80b3ff" />
            <path d="M15 16l7 7-7 7-7-7z" fill="#ffe17a" />
            <path d="M11 4l3.500 6v12M14.500 11l6 5" fill="none" stroke="#3a2416" strokeWidth="1.800" />
            <circle cx="14.500" cy="10.500" r="2.200" fill="#3a2416" />
            <circle cx="14.500" cy="21.500" r="2.200" fill="#3a2416" />
            <circle cx="20.500" cy="15.500" r="2.200" fill="#3a2416" />
          </svg>
        </Slot>
      </div>
      <div className="mr-[24px] ml-auto flex items-center">
        <svg viewBox="0 0 14 8" className="h-[8px] w-[14px]" fill="none" stroke="#fff" strokeWidth="1.700">
          <path d="M1 7l6-6 6 6" />
        </svg>
        <svg viewBox="0 0 22 18" className="ml-[22px] h-[18px] w-[22px]">
          <path d="M6 3q4-5 9-1 4 0 4 5v5H4z" fill="#8f8f8f" />
          <path d="M4 13q-4 0-4-4t4-4q3-2 6 1l4 7z" fill="#d8d8d8" />
          <circle cx="15.500" cy="12" r="6" fill="#d8202a" />
          <path d="M13.500 10l4 4M17.500 10l-4 4" stroke="#fff" strokeWidth="1.500" />
        </svg>
        <span className="ml-[23px] w-[28px] pb-[1px] text-[14.300px] tracking-[-0.1px]">TUR</span>
        <svg viewBox="0 0 20 16" className="ml-[23px] h-[16px] w-[20px]" fill="none" stroke="#fff" strokeWidth="1.400">
          <path d="M1 6q9-9 18 0" stroke="#6f737b" />
          <path d="M4 9q6-6 12 0M6.500 12q3.500-3.500 7 0" />
          <circle cx="10" cy="14" r="1.300" fill="#fff" stroke="none" />
        </svg>
        <svg viewBox="0 0 21 16" className="ml-[9px] h-[16px] w-[21px]" fill="none" stroke="#fff" strokeWidth="1.400">
          <path d="M1 5.500h3L9 1.500v13L4 10.500H1zM11.500 5.500q2 2.500 0 5" />
          <path d="M14 3.500q3 4.500 0 9M17 1.500q4 6.500 0 13" stroke="#6f737b" />
        </svg>
        <svg viewBox="0 0 21 16" className="ml-[9px] h-[16px] w-[21px]">
          <rect x="2" y="4" width="16" height="11" rx="2.500" fill="none" stroke="#fff" strokeWidth="1.500" />
          <path d="M5 7h10v5.500H5zM18.500 7.500h2v4h-2zM3 0L0 6h3v4l4-6H4V0z" fill="#fff" />
        </svg>
        <div className="ml-[19px] flex w-[79px] flex-col items-end pb-[2px] text-[14.500px] leading-[20px] tracking-[0.020px] whitespace-nowrap">
          <span>4:37 pm</span>
          <span>06/10/2025</span>
        </div>
      </div>
    </div>
  );
}

export default function App() {
  return (
    <div className="relative flex h-[1080px] w-[1920px] flex-col overflow-hidden bg-[#3b3b3b] font-['Liberation_Sans',Arial,sans-serif]">
      <TabStrip />
      <Toolbar />
      <div className="mx-[5px] flex h-[923px] shrink-0 overflow-hidden rounded-[10px] bg-white">
        <div className="flex w-[1891px] flex-col overflow-hidden">
          <NavBar />
          <div className="mr-[19px] ml-[19px] flex flex-1 flex-col">
            <FilterBar />
            <LegendRow />
            <div className="flex h-[726px]">
              <GridPanel />
              <div className="w-[7px] shrink-0 bg-[#e2e8f0]" />
              <div className="flex flex-1 flex-col">
                <TaskHeader />
                <TabsRow />
                <GraphCanvas />
              </div>
            </div>
          </div>
        </div>
        <ScrollBar />
      </div>
      <div className="h-[4px] shrink-0" />
      <Taskbar />
      <div className={`${UI} absolute top-[965px] left-[909px] flex h-[39px] w-[127px] items-center justify-center rounded-[6px] border border-[#454545] bg-[#323232] text-[14.500px] tracking-[0.050px] text-[#f2f2f2] shadow-[0_4px_8px_rgba(0,0,0,0.350)]`}>
        Microsoft Store
      </div>
    </div>
  );
}
